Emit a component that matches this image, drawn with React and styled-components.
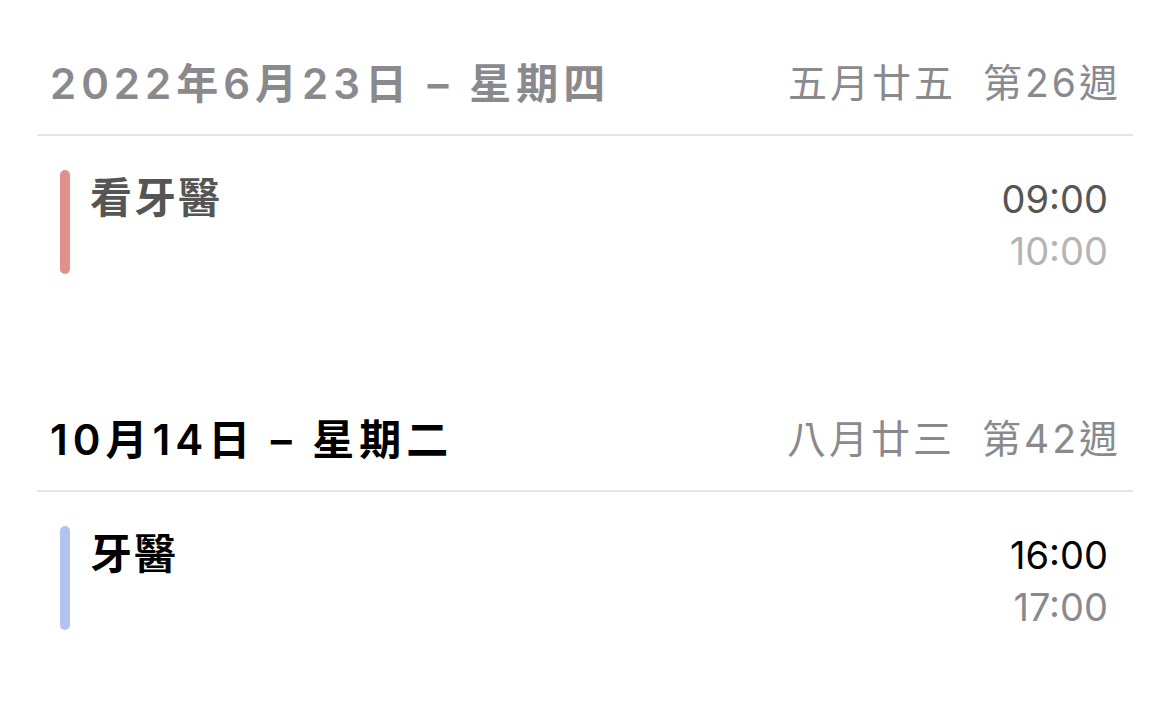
import styled, { createGlobalStyle } from "styled-components";

const GlobalStyle = createGlobalStyle`
  html, body {
    margin: 0;
    padding: 0;
    background: #ffffff;
  }
  body {
    font-family: Inter, "Liberation Sans", "Noto Sans CJK TC", sans-serif;
  }
`;

const days = [
  {
    date: "2022年6月23日 – 星期四",
    past: true,
    lunar: "五月廿五",
    week: "第26週",
    events: [{ title: "看牙醫", start: "09:00", end: "10:00", color: "#e0918a" }],
  },
  {
    date: "10月14日 – 星期二",
    past: false,
    lunar: "八月廿三",
    week: "第42週",
    events: [{ title: "牙醫", start: "16:00", end: "17:00", color: "#b3c3f0" }],
  },
];

function App() {
  return (
    <>
      <GlobalStyle />
      <Page>
        {days.map((day) => (
          <Section key={day.date}>
            <DayHeader>
              <DayTitle $past={day.past}>{day.date}</DayTitle>
              <DayMeta>
                <span>{day.lunar}</span>
                <span>{day.week}</span>
              </DayMeta>
            </DayHeader>
            <Divider />
            {day.events.map((ev) => (
              <EventRow key={ev.title}>
                <ColorBar $color={ev.color} />
                <EventTitle $past={day.past}>{ev.title}</EventTitle>
                <Times>
                  <Start $past={day.past}>{ev.start}</Start>
                  <End $past={day.past}>{ev.end}</End>
                </Times>
              </EventRow>
            ))}
          </Section>
        ))}
      </Page>
    </>
  );
}

export default App;

// STYLED COMPONENTS

const Page = styled.div`
  padding: 36px 37px 0;
  display: flex;
  flex-direction: column;
`;

const Section = styled.section`
  display: flex;
  flex-direction: column;
`;

const DayHeader = styled.div`
  height: 98px;
  box-sizing: border-box;
  padding: 0 12px 10px 13px;
  display: flex;
  align-items: center;
  justify-content: space-between;
`;

const DayTitle = styled.h2`
  margin: 0;
  font-size: 42px;
  font-weight: 600;
  letter-spacing: 5px;
  color: ${(p) => (p.$past ? "#8a8a8e" : "#000000")};
`;

const DayMeta = styled.div`
  display: flex;
  gap: 27px;
  font-size: 39px;
  font-weight: 400;
  letter-spacing: 3px;
  color: #8a8a8e;
`;

const Divider = styled.div`
  height: 2px;
  background: #e5e5e5;
`;

const EventRow = styled.div`
  height: 256px;
  box-sizing: border-box;
  padding: 34px 25px 0 23px;
  display: flex;
  align-items: flex-start;
`;

const ColorBar = styled.div`
  width: 10px;
  height: 104px;
  border-radius: 5px;
  background: ${(p) => p.$color};
  flex-shrink: 0;
`;

const EventTitle = styled.div`
  margin-left: 20px;
  flex: 1;
  font-size: 42px;
  line-height: 56px;
  font-weight: 600;
  letter-spacing: 2px;
  color: ${(p) => (p.$past ? "#555555" : "#000000")};
`;

const Times = styled.div`
  padding-top: 3px;
  display: flex;
  flex-direction: column;
  align-items: flex-end;
  font-size: 38px;
  line-height: 52px;
`;

const Start = styled.span`
  color: ${(p) => (p.$past ? "#555555" : "#000000")};
`;

const End = styled.span`
  color: ${(p) => (p.$past ? "#b4b4b4" : "#8a8a8e")};
`;
